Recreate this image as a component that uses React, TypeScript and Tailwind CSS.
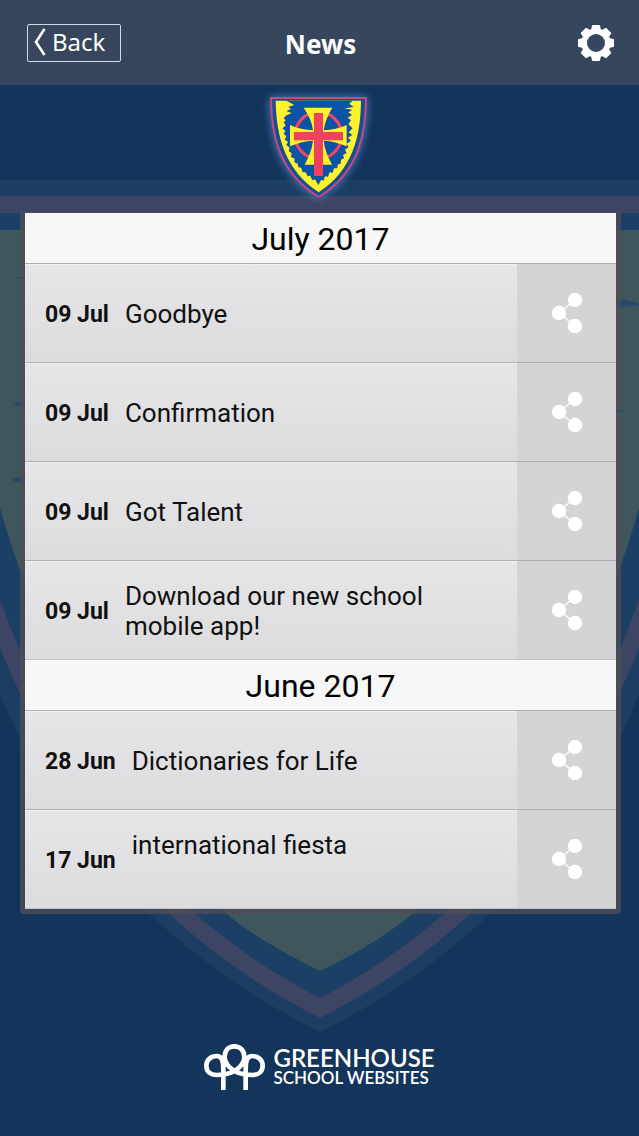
const months = [
  {
    name: 'July 2017',
    items: [
      { date: '09 Jul', title: 'Goodbye' },
      { date: '09 Jul', title: 'Confirmation' },
      { date: '09 Jul', title: 'Got Talent' },
      { date: '09 Jul', title: 'Download our new school mobile app!' },
    ],
  },
  {
    name: 'June 2017',
    items: [
      { date: '28 Jun', title: 'Dictionaries for Life' },
      { date: '17 Jun', title: 'international fiesta\n\u00a0' },
    ],
  },
]

const gearTeeth = [0, 45, 90, 135, 180, 225, 270, 315]

const GearIcon = () => (
  <svg viewBox="-18 -18 36 36" className="h-9 w-9" aria-hidden="true">
    <circle r="11.8" fill="none" stroke="white" strokeWidth="5.6" />
    {gearTeeth.map((angle) => (
      <path key={angle} d="M-5 -13 L-4 -17.2 Q-3.8 -18 -3 -18 H3 Q3.8 -18 4 -17.2 L5 -13Z" fill="white" transform={`rotate(${angle})`} />
    ))}
  </svg>
)

const ShareIcon = () => (
  <svg viewBox="0 0 32 40" className="h-10 w-8" aria-hidden="true">
    <path d="M24 7 8 20 24 33" fill="none" stroke="#fafafa" strokeWidth="1.6" />
    <circle cx="24" cy="7" r="7.2" fill="white" />
    <circle cx="8" cy="20" r="7.2" fill="white" />
    <circle cx="24" cy="33" r="7.2" fill="white" />
  </svg>
)

const Backdrop = () => (
  <svg
    viewBox="0 0 639 1136"
    preserveAspectRatio="xMidYMin slice"
    className="absolute inset-0 h-full w-full"
    aria-hidden="true"
  >
    <path
      fill="#1c3e63"
      d="M0 180H639V694C600 790 555 860 492 912Q415 985 320 1032Q225 985 147 912C84 860 40 790 0 694Z"
    />
    <path
      fill="#3e4564"
      d="M0 196H639V648C600 745 540 850 472 912Q405 975 320 1018Q235 975 167 912C100 850 40 745 0 648Z"
    />
    <path
      fill="#1b3f65"
      d="M0 213H639V600C600 710 525 845 446 912Q385 965 320 998Q255 965 193 912C115 845 40 710 0 600Z"
    />
    <path
      fill="#3f565d"
      d="M0 230H639V508C594 665 505 835 415 912Q375 945 320 971Q260 942 224 912C135 835 45 665 0 508Z"
    />
    <path fill="#244a6b" d="M13 404 26 400V409ZM11 480 26 474V484ZM17 277H26V279H17ZM616 298 639 303V305L616 308ZM616 408 624 411 616 414Z" />
  </svg>
)

const Crest = () => (
  <svg
    viewBox="0 0 390 360"
    className="h-[120px] w-[130px] drop-shadow-[0_0_4px_#4a7fc4]"
    role="img"
    aria-label="School crest"
  >
    <path fill="#174f96" d="M45 36H336C336 160 310 270 191 341C72 270 45 160 45 36Z" />
    <path fill="none" stroke="#c74a7e" strokeWidth="6" d="M48 39H333C332 165 303 268 191 336C79 268 49 165 48 39Z" />
    <path fill="#fff22d" d="M62 47H318C317 155 292 255 191 322C90 255 64 155 62 47Z" />
    <path
      fill="#0b53a5"
      d="M94 47 118 60 100 65 108 72 94 78 110 84 92 92 86 100 92 106 86 112 92 122 82 130 91 138 86 146 94 154 89 164 99 170 94 180 104 188 101 198 110 205 108 216 119 221 118 232 128 236 130 246 139 249 143 262 152 262 158 274 166 272 172 286 180 283 190 300 199 284 206 287 210 274 219 275 224 262 233 263 237 250 246 250 249 238 257 236 258 224 267 220 264 210 275 204 270 194 281 186 274 176 288 168 279 158 292 150 281 142 293 130 280 118 288 106 278 98 291 90 280 82 292 75 268 70 296 66 283 56 292 47Z"
    />
    <circle cx="190" cy="151" r="70" fill="none" stroke="#ee4862" strokeWidth="9" />
    <path
      fill="#fff22d"
      d="M146 68H232C219 90 209 112 206 136C230 135 253 130 275 120V184C253 174 230 168 206 167C209 192 218 215 231 239H149C162 215 171 192 174 167C150 168 127 174 105 184V120C127 130 150 135 174 136C171 112 161 90 146 68Z"
    />
    <path fill="#f0415f" d="M177 84H204V141H264V166H204V273H177V166H117V141H177Z" />
  </svg>
)

const TreeLogo = () => (
  <svg viewBox="0 0 183 138" className="h-[46px] w-[61px]" aria-hidden="true">
    <path
      d="M58 138V74C58 50 52 36 39 36C20 36 7 48 7 65C7 83 20 93 39 93C68 93 90 86 106 70C116 60 121 50 121 39C121 19 108 7 91 7C74 7 62 19 62 39C62 50 67 60 77 70C93 86 115 93 144 93C163 93 176 83 176 65C176 48 163 36 144 36C131 36 125 50 125 74V138"
      fill="none"
      stroke="white"
      strokeWidth="14"
    />
  </svg>
)

const App = () => {
  return (
    <div className="relative isolate flex min-h-screen flex-col bg-[#13355b] font-[Roboto,sans-serif] text-[#111]">
      <Backdrop />

      <header className="relative grid h-[85px] grid-cols-3 items-center bg-[#36465c] pr-[25px] pl-[27px] font-['Noto_Sans',sans-serif] text-white">
        <button
          type="button"
          className="flex h-[38px] w-[94px] items-center gap-1.5 justify-self-start rounded-xs border border-[#c9dcee] pb-0.5 pl-1.5 text-2xl"
        >
          <svg viewBox="0 0 12 28" className="h-7 w-3 shrink-0" aria-hidden="true">
            <path d="M10.5 1 2 14 10.5 27" fill="none" stroke="white" strokeWidth="2.6" />
          </svg>
          Back
        </button>
        <h1 className="pt-1 text-center text-[26px] font-bold">News</h1>
        <button type="button" aria-label="Settings" className="justify-self-end">
          <GearIcon />
        </button>
      </header>

      <div className="relative flex justify-center">
        <Crest />
      </div>

      <main className="relative mt-[7px] mr-[18px] ml-5 rounded-b-sm border-x-[5px] border-t border-b-[5px] border-[#4d4d58]/80">
        {months.map((month) => (
          <section key={month.name}>
            <h2 className="flex h-[51px] items-center justify-center border-b border-[#b0b0b2] bg-[#f8f7f8] pt-0.5 text-[32px] text-black">
              {month.name}
            </h2>
            <ul>
              {month.items.map((item) => (
                <li
                  key={item.title}
                  className="flex h-[99px] border-b border-[#b0b0b2] bg-linear-to-b from-[#e6e5e7] to-[#dcdbdd] last:border-[#c4c4c6]"
                >
                  <a href="#" className="flex flex-1 items-center gap-4 border-t border-[#f0f0f1] pr-4 pl-5">
                    <span className="shrink-0 pt-0.5 text-[23px] leading-8 font-bold">{item.date}</span>
                    <span className="max-w-[340px] text-[26px] leading-[30px] whitespace-pre-line">{item.title}</span>
                  </a>
                  <button
                    type="button"
                    aria-label={`Share ${item.title.trim()}`}
                    className="flex w-[99px] items-center justify-center bg-[#d4d3d5]"
                  >
                    <ShareIcon />
                  </button>
                </li>
              ))}
            </ul>
          </section>
        ))}
      </main>

      <footer className="relative mt-auto flex items-center justify-center gap-2 pb-[46px] font-[Lato,sans-serif] text-white">
        <TreeLogo />
        <div>
          <p className="text-2xl leading-[22px] font-semibold">GREENHOUSE</p>
          <p className="text-[17px] leading-[18px] font-semibold">SCHOOL WEBSITES</p>
        </div>
      </footer>
    </div>
  )
}

export default App
